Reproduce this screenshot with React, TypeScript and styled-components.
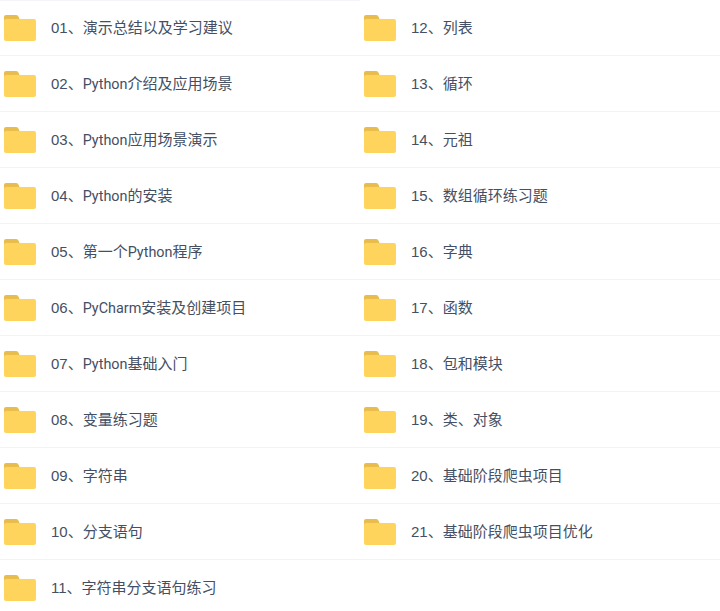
import styled, { createGlobalStyle } from "styled-components";

const GlobalStyle = createGlobalStyle`
  html, body {
    margin: 0;
    background: #fff;
  }
`;

const Page = styled.div`
  width: 720px;
  height: 611px;
  overflow: hidden;
  display: grid;
  grid-template-columns: 360px 360px;
  font-family: "Liberation Sans", "Noto Sans CJK SC", sans-serif;
`;

const Column = styled.ul<{ $ruled?: boolean }>`
  list-style: none;
  margin: 0;
  padding: 0;
  box-shadow: ${(p) => (p.$ruled ? "inset 0 1px 0 #f3f5fb" : "none")};
`;

const Row = styled.li`
  display: flex;
  align-items: center;
  gap: 15px;
  height: 54px;
  padding: 1px 0 0 4px;
  border-bottom: 1px solid #f2f3f5;
  font-size: 15px;
  line-height: 20px;
  color: #454f63;
  white-space: nowrap;
`;

// the latin words sit narrower than the digits and the CJK text around them
const Latin = styled.span`
  font-family: Roboto, sans-serif;
  font-size: 14.4px;
`;

function FolderIcon() {
  return (
    <svg width="32" height="26" viewBox="0 0 32 26" aria-hidden="true">
      <path d="M0 2a2 2 0 0 1 2-2h10c1.4 0 2.2.7 2.7 2l.8 2v2H0z" fill="#e9bd4c" />
      <rect x="0" y="4" width="32" height="22" rx="2" fill="#ffd45c" />
    </svg>
  );
}

const leftItems = [
  "01、演示总结以及学习建议",
  "02、Python介绍及应用场景",
  "03、Python应用场景演示",
  "04、Python的安装",
  "05、第一个Python程序",
  "06、PyCharm安装及创建项目",
  "07、Python基础入门",
  "08、变量练习题",
  "09、字符串",
  "10、分支语句",
  "11、字符串分支语句练习",
];

const rightItems = [
  "12、列表",
  "13、循环",
  "14、元祖",
  "15、数组循环练习题",
  "16、字典",
  "17、函数",
  "18、包和模块",
  "19、类、对象",
  "20、基础阶段爬虫项目",
  "21、基础阶段爬虫项目优化",
];

function FolderRow({ name }: { name: string }) {
  return (
    <Row>
      <FolderIcon />
      <span>
        {name.split(/([A-Za-z]+)/).map((part, i) =>
          i % 2 ? <Latin key={i}>{part}</Latin> : part
        )}
      </span>
    </Row>
  );
}

export default function App() {
  return (
    <>
      <GlobalStyle />
      <Page>
        <Column $ruled>
          {leftItems.map((name) => (
            <FolderRow key={name} name={name} />
          ))}
        </Column>
        <Column>
          {rightItems.map((name) => (
            <FolderRow key={name} name={name} />
          ))}
        </Column>
      </Page>
    </>
  );
}
